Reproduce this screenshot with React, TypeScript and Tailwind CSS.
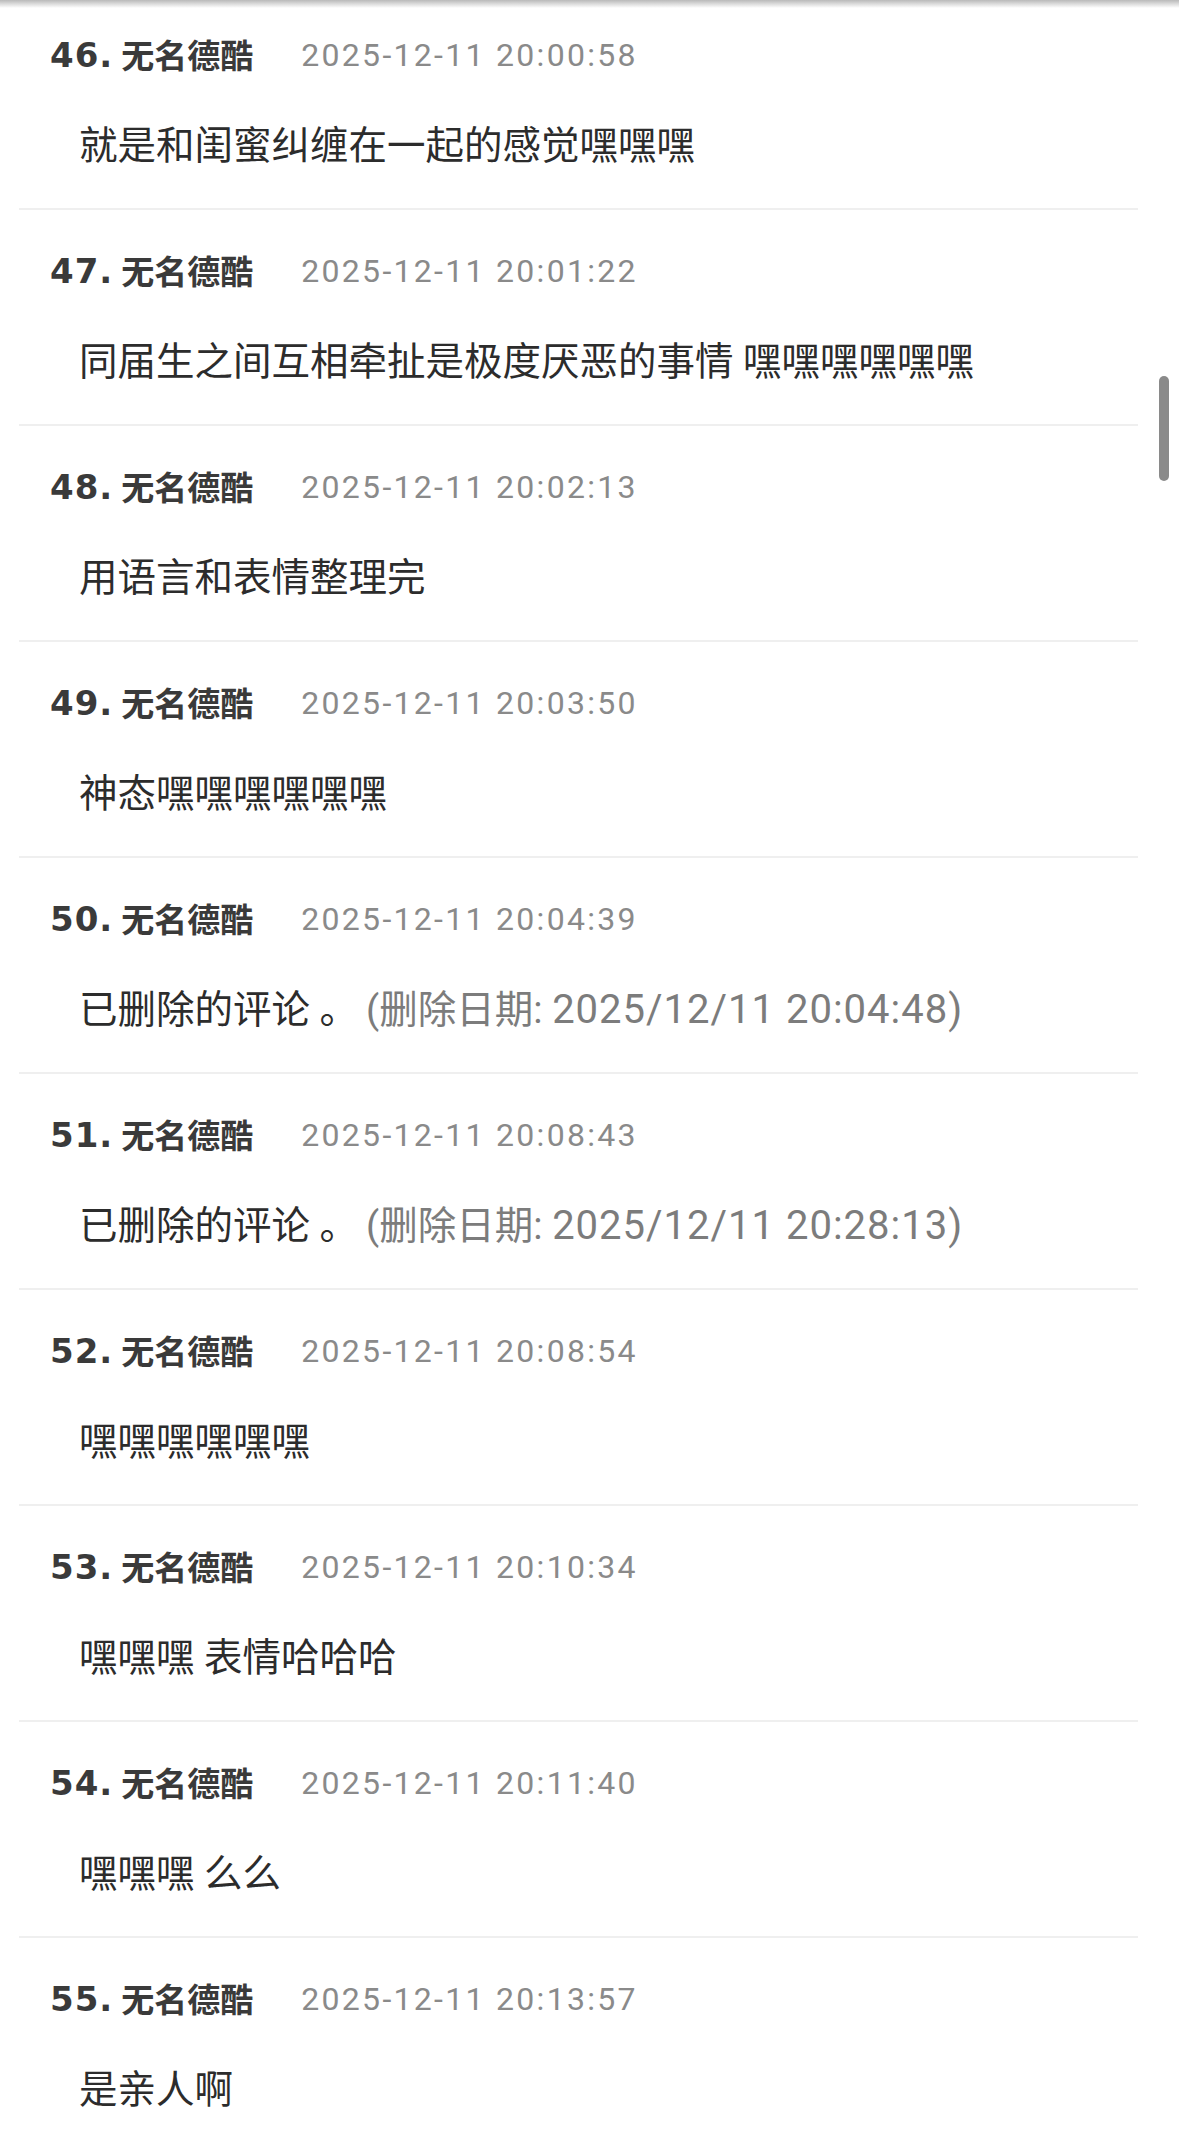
const comments = [
  { no: 46, time: "2025-12-11 20:00:58", text: "就是和闺蜜纠缠在一起的感觉嘿嘿嘿" },
  { no: 47, time: "2025-12-11 20:01:22", text: "同届生之间互相牵扯是极度厌恶的事情 嘿嘿嘿嘿嘿嘿" },
  { no: 48, time: "2025-12-11 20:02:13", text: "用语言和表情整理完" },
  { no: 49, time: "2025-12-11 20:03:50", text: "神态嘿嘿嘿嘿嘿嘿" },
  { no: 50, time: "2025-12-11 20:04:39", text: "已删除的评论 。", deleted: "2025/12/11 20:04:48)" },
  { no: 51, time: "2025-12-11 20:08:43", text: "已删除的评论 。", deleted: "2025/12/11 20:28:13)" },
  { no: 52, time: "2025-12-11 20:08:54", text: "嘿嘿嘿嘿嘿嘿" },
  { no: 53, time: "2025-12-11 20:10:34", text: "嘿嘿嘿 表情哈哈哈" },
  { no: 54, time: "2025-12-11 20:11:40", text: "嘿嘿嘿 么么" },
  { no: 55, time: "2025-12-11 20:13:57", text: "是亲人啊" },
];

type Comment = (typeof comments)[number];

function CommentRow({ c }: { c: Comment }) {
  return (
    <li className="border-b-2 border-[#efefef] pt-[41px] pb-[37px]">
      <div className="flex h-[40px] items-center pl-[31px] text-[#3a3a3a]">
        <span className="text-[34px] font-bold tracking-[1px] [font-family:'DejaVu_Sans',sans-serif]">
          {c.no}.
        </span>
        <span className="ml-[8px] text-[33px] font-bold [font-family:'Noto_Sans_CJK_SC',sans-serif]">
          无名德酷
        </span>
        <span className="ml-[48px] text-[32px] tracking-[2.3px] text-[#8a8a8a] [font-family:Roboto,sans-serif]">
          {c.time}
        </span>
      </div>
      <p className="mt-[46px] flex h-[50px] items-center pl-[60px] text-[38.5px] text-[#2c2c2c] [font-family:Roboto,'Noto_Sans_CJK_SC',sans-serif]">
        <span className="whitespace-pre">{c.text}</span>
        {"deleted" in c && c.deleted ? (
          <span className="ml-[8px] whitespace-pre text-[#7c7c7c]">
            (删除日期:{" "}
            <span className="text-[40px] tracking-[1px]">{c.deleted}</span>
          </span>
        ) : null}
      </p>
    </li>
  );
}

export default function App() {
  return (
    <div className="relative h-[2142px] w-[1179px] overflow-hidden bg-white">
      <div className="absolute inset-x-0 top-0 z-10 h-[8px] bg-gradient-to-b from-[#b9b9b9] to-white/0" />
      <ul className="-mt-[6px] ml-[19px] w-[1119px]">
        {comments.map((c) => (
          <CommentRow key={c.no} c={c} />
        ))}
      </ul>
      <div className="absolute left-[1159px] top-[376px] h-[105px] w-[10px] rounded-full bg-[#8a8a8a]" />
    </div>
  );
}
